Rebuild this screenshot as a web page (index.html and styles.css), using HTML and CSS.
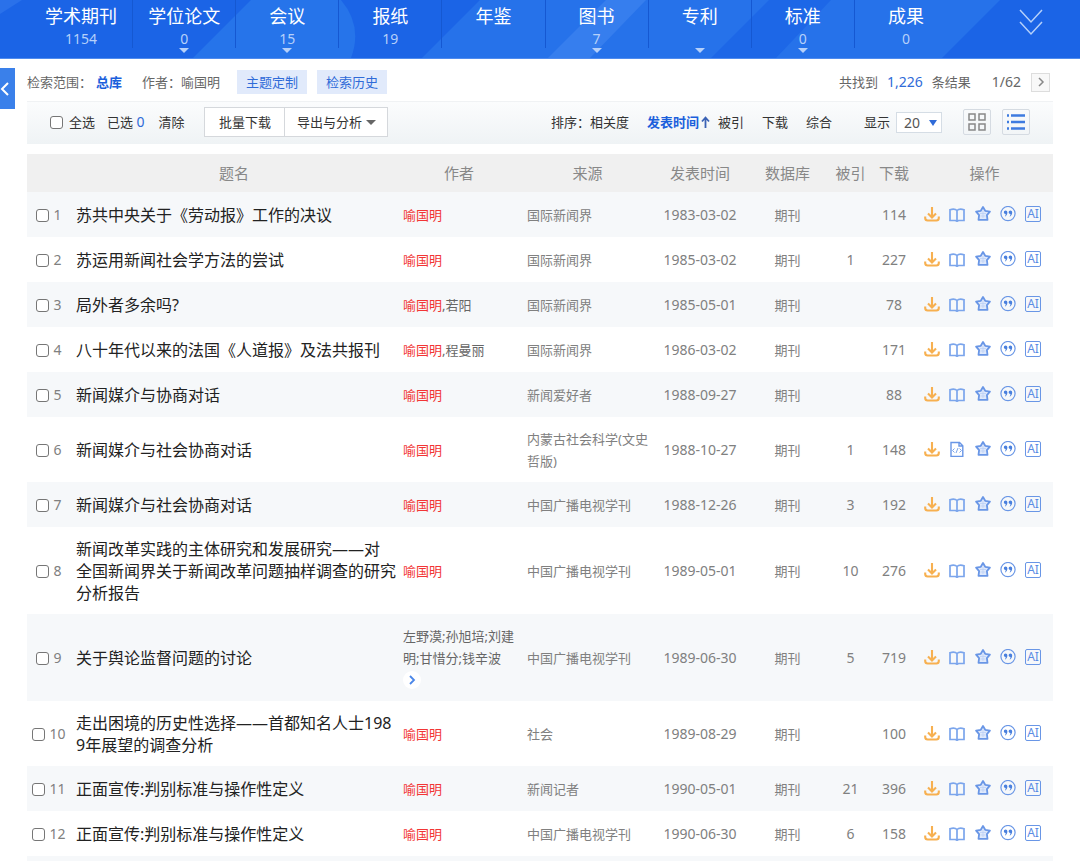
FILE: index.html
```html
<!DOCTYPE html>
<html lang="zh-CN">
<head>
<meta charset="utf-8">
<title>检索结果</title>
<link rel="stylesheet" href="styles.css">
</head>

<body>
<svg class="sprite" aria-hidden="true">
  <symbol id="i-down" viewBox="0 0 16 16"><path d="M8 1v10M4 7.500l4 4 4-4M1.200 10.500v1.500a2.500 2.500 0 0 0 2.500 2.500h8.600a2.500 2.500 0 0 0 2.500-2.500v-1.500" fill="none" stroke="#f7b050" stroke-width="2.100"/></symbol>
  <symbol id="i-book" viewBox="0 0 16 16"><path d="M8 4.500C6.500 3 3.500 3 1 3.700V14.500h5.500L8 15.300l1.500-.8H15V3.700C12.500 3 9.500 3 8 4.500zM8 4.500V15" fill="none" stroke="#7ba5ec" stroke-width="1.700"/></symbol>
  <symbol id="i-html" viewBox="0 0 16 16"><path d="M2 1.500h8.500l3.300 3.300v10.700H2zM10 1.500V5h3.500" fill="none" stroke="#6996e6" stroke-width="1.400"/><path d="M5.500 7.500l-2 2 2 2M10.500 7.500l2 2-2 2M9 7l-2 5" fill="none" stroke="#7ba5ec"/></symbol>
  <symbol id="i-star" viewBox="0 0 16 16"><path d="M8 1l2.200 3.800 4.700.9-3 3.400.6 4.700H3.500l.6-4.700-3-3.400 4.700-.9z" fill="#dfe9fb" stroke="#6996e6" stroke-width="1.800" stroke-linejoin="round"/><path d="M5 7.500h6M5.500 10h5M8 5v7" stroke="#b9cff5" stroke-width=".7"/></symbol>
  <symbol id="i-quote" viewBox="0 0 16 16"><circle cx="8" cy="7.600" r="7.100" fill="none" stroke="#6996e6" stroke-width="1.200"/><path d="M3.800 6.300a1.800 1.800 0 1 1 3.600 0c0 2-1 3.600-2.600 4.400.6-1 .9-1.600.9-2.600a1.800 1.800 0 0 1-1.900-1.800zM8.600 6.300a1.800 1.800 0 1 1 3.600 0c0 2-1 3.600-2.600 4.400.6-1 .9-1.600.9-2.600a1.800 1.800 0 0 1-1.900-1.800z" fill="#4a80de"/></symbol>
</svg>

<div class="header">
  <svg class="header-bg" viewBox="0 0 1080 58" preserveAspectRatio="none" aria-hidden="true">
    <path d="M0 0h22L0 14z" fill="#2a71ea"/>
    <path d="M193 58L251 0h90q22 26 10 58z" fill="#2674ea"/>
    <path d="M422 58L480 0h520l-58 58z" fill="#2672ea"/>
    <path d="M548 58L606 0h40l-56 58z" fill="#367eee"/>
    <path d="M711 58L769 0h62l-55 58z" fill="#1d67e7"/>
  </svg>
  <ul class="nav">
    <li><a href="#">学术期刊<em>1154</em></a></li>
    <li class="more"><a href="#">学位论文<em>0</em></a></li>
    <li class="more"><a href="#">会议<em>15</em></a></li>
    <li><a href="#">报纸<em>19</em></a></li>
    <li><a href="#">年鉴<em></em></a></li>
    <li class="more"><a href="#">图书<em>7</em></a></li>
    <li class="more"><a href="#">专利<em></em></a></li>
    <li class="more"><a href="#">标准<em>0</em></a></li>
    <li><a href="#">成果<em>0</em></a></li>
  </ul>
  <button class="expand" aria-label="展开"><svg width="26" height="28" viewBox="0 0 26 28"><path d="M2 2l11 12L24 2M2 14l11 12 11-12" fill="none" stroke="#b5d0fa" stroke-width="1.500"/></svg></button>
</div>

<button class="side" aria-label="展开侧栏"><svg width="10" height="14" viewBox="0 0 10 14"><path d="M8 1L2 7l6 6" fill="none" stroke="#fff" stroke-width="2"/></svg></button>

<div class="main">
  <div class="search">
    <span>检索范围<u>：</u></span><a class="db" href="#">总库</a>
    <span class="cond">作者<u>：</u>喻国明</span>
    <button class="tag">主题定制</button>
    <button class="tag">检索历史</button>
    <div class="total">共找到<b>1,226</b>条结果</div>
    <span class="page">1/62</span>
    <button class="next" aria-label="下一页"><svg width="8" height="10" viewBox="0 0 8 10"><path d="M2 1l4 4-4 4" fill="none" stroke="#888" stroke-width="1.500"/></svg></button>
  </div>

  <div class="toolbar">
    <label class="all"><input type="checkbox">全选</label>
    <span class="picked">已选 <i>0</i></span>
    <a class="clean" href="#">清除</a>
    <div class="btns">
      <button>批量下载</button>
      <button>导出与分析<s></s></button>
    </div>
    <div class="sort">
      <span>排序<u>：</u></span><a href="#">相关度</a>
      <a class="active" href="#">发表时间<svg width="13" height="12" viewBox="0 0 13 12"><path d="M6.500 12V2M3 5.500l3.500-4 3.500 4" fill="none" stroke="#3b62b5" stroke-width="1.800"/></svg></a>
      <a href="#">被引</a>
      <a href="#">下载</a>
      <a href="#">综合</a>
    </div>
    <label class="show" for="size">显示</label>
    <div class="size"><select id="size"><option>20</option><option>50</option></select></div>
    <button class="view" aria-label="缩略"><svg width="20" height="20" viewBox="0 0 20 20"><path d="M2 2h6v6H2zM12 2h6v6h-6zM2 12h6v6H2zM12 12h6v6h-6z" fill="none" stroke="#888" stroke-width="1.500"/></svg></button>
    <button class="view" aria-label="列表"><svg width="20" height="20" viewBox="0 0 20 20"><path d="M5 3.500h14M5 10h14M5 16.500h14M1 3.500h2M1 10h2M1 16.500h2" stroke="#3e7be0" stroke-width="2.600"/></svg></button>
  </div>

  <table class="result">
    <colgroup>
      <col class="c-num"><col><col class="c-author"><col class="c-source"><col class="c-date"><col class="c-data"><col class="c-quote"><col class="c-down"><col class="c-op">
    </colgroup>
    <thead>
      <tr><th></th><th>题名</th><th>作者</th><th>来源</th><th>发表时间</th><th>数据库</th><th>被引</th><th>下载</th><th>操作</th></tr>
    </thead>
    <tbody id="list"></tbody>
  </table>
  <div class="foot"></div>
</div>

<script>
	var me = '<a class="red" href="#">喻国明</a>';
	//题名, 作者, 来源, 发表时间, 被引, 下载, 图标
	var data = [
		['苏共中央关于《劳动报》工作的决议', me, '国际新闻界', '1983-03-02', '', 114],
		['苏运用新闻社会学方法的尝试', me, '国际新闻界', '1985-03-02', 1, 227],
		['局外者多余吗?', me + ',若阳', '国际新闻界', '1985-05-01', '', 78],
		['八十年代以来的法国《人道报》及法共报刊', me + ',程曼丽', '国际新闻界', '1986-03-02', '', 171],
		['新闻媒介与协商对话', me, '新闻爱好者', '1988-09-27', '', 88],
		['新闻媒介与社会协商对话', me, '内蒙古社会科学(文史哲版)', '1988-10-27', 1, 148, 'html'],
		['新闻媒介与社会协商对话', me, '中国广播电视学刊', '1988-12-26', 3, 192],
		['新闻改革实践的主体研究和发展研究——对<br>全国新闻界关于新闻改革问题抽样调查的研究分析报告', me, '中国广播电视学刊', '1989-05-01', 10, 276],
		['关于舆论监督问题的讨论', '左野漠;孙旭培;刘建明;甘惜分;钱辛波<button class="unfold" aria-label="更多作者"><svg width="8" height="10" viewBox="0 0 8 10"><path d="M2 1l4 4-4 4" fill="none" stroke="#4a86e8" stroke-width="1.800"/></svg></button>', '中国广播电视学刊', '1989-06-30', 5, 719],
		['走出困境的历史性选择——首都知名人士1989年展望的调查分析', me, '社会', '1989-08-29', '', 100],
		['正面宣传:判别标准与操作性定义', me, '新闻记者', '1990-05-01', 21, 396],
		['正面宣传:判别标准与操作性定义', me, '中国广播电视学刊', '1990-06-30', 6, 158]
	];

	function icon(name, title){
		return '<button aria-label="' + title + '"><svg width="16" height="16"><use href="#i-' + name + '"/></svg></button>';
	}

	var html = '';
	for(var i=0; i<data.length; i++){
		var d = data[i];
		html += '<tr><td class="num"><label><input type="checkbox">' + (i+1) + '</label></td>' +
			'<td class="name"><a href="#">' + d[0] + '</a></td>' +
			'<td class="author">' + d[1] + '</td>' +
			'<td class="source">' + d[2] + '</td>' +
			'<td class="date">' + d[3] + '</td>' +
			'<td>期刊</td>' +
			'<td class="date">' + d[4] + '</td>' +
			'<td class="date">' + d[5] + '</td>' +
			'<td class="op"><div>' + icon('down', '下载') + icon(d[6] || 'book', '阅读') + icon('star', '收藏') + icon('quote', '引用') +
			'<button class="ai">AI</button></div></td></tr>';
	}
	document.getElementById('list').innerHTML = html;
</script>
</body>
</html>
```

FILE: styles.css
```css
*{
	margin:0;
	padding:0;
	box-sizing:border-box;
	}
html{
	scrollbar-width:none;
	}
body{
	font:13px/22px "Noto Sans","Noto Sans CJK SC",sans-serif;
	color:#666;
	background:#fff;
	position:relative;
	}
li{
	list-style:none;
	}
a{
	color:inherit;
	text-decoration:none;
	}
em,i{
	font-style:normal;
	}
/* 居中的冒号 */
u{
	font-family:"Noto Sans CJK TC",sans-serif;
	line-height:1;
	text-decoration:none;
	}
button{
	border:0;
	background:none;
	font:inherit;
	color:inherit;
	cursor:pointer;
	}
svg{
	display:block;
	}
.sprite{
	position:absolute;
	width:0;
	height:0;
	}
input[type=checkbox]{
	appearance:none;
	width:13px;
	height:13px;
	border:1px solid #767676;
	border-radius:3px;
	background:#fff;
	}
input[type=checkbox]:checked{
	background:#1b66e6;
	}

/* 顶部导航 */
.header{
	display:flex;
	height:59px;
	padding-left:30px;
	background:#1b64e6;
	border-bottom:1px solid #4f8bee;
	position:relative;
	}
.header-bg{
	position:absolute;
	left:0;
	top:0;
	width:100%;
	height:100%;
	}
.nav{
	flex:1;
	display:flex;
	position:relative;
	}
.nav li{
	flex:1;
	height:48px;
	border-right:1px solid #1558d2;
	text-align:center;
	position:relative;
	}
.nav li:last-child{
	border-right:0;
	}
.nav a{
	display:block;
	padding-top:4px;
	font-size:18px;
	line-height:24px;
	color:#fff;
	}
.nav em{
	display:block;
	font-size:14px;
	line-height:22px;
	color:#b5d0fa;
	}
.nav .more:after{
	content:"";
	position:absolute;
	left:50%;
	top:48px;
	margin-left:-5px;
	border:5px solid transparent;
	border-top-color:#b5d0fa;
	border-bottom:0;
	}
.expand{
	width:123px;
	padding:0 0 14px 24px;
	position:relative;
	}
.expand svg{
	margin:0 auto;
	}
.side{
	position:absolute;
	left:0;
	top:68px;
	width:15px;
	height:41px;
	background:#3a80ea;
	}

.main{
	padding:0 27px;
	}
.search{
	display:flex;
	align-items:center;
	height:42px;
	padding:4px 3px 0 0;
	}
.search .db{
	margin-left:4px;
	font-weight:bold;
	color:#1b5fdc;
	}
.cond{
	margin:0 17px 0 20px;
	}
.tag{
	width:70px;
	height:24px;
	margin-right:10px;
	background:#e1eafb;
	color:#2f6bd8;
	}
.total{
	margin-left:auto;
	}
.total b{
	margin:0 9px;
	font-size:14px;
	font-weight:normal;
	color:#2f6bd8;
	}
.page{
	margin:0 10px 0 21px;
	font-size:14px;
	}
.next{
	width:19px;
	height:19px;
	padding-left:5px;
	border:1px solid #ddd;
	background:#f8f8f8;
	}

/* 工具栏 */
.toolbar{
	display:flex;
	align-items:center;
	height:43px;
	padding:0 23px 2px;
	border-top:1px solid #f0f2f4;
	background:linear-gradient(#fbfcfd,#eff3f5);
	color:#333;
	}
.all{
	display:flex;
	align-items:center;
	gap:6px;
	}
.picked{
	margin:0 14px 0 12px;
	}
.picked i{
	font-size:14px;
	color:#2f6bd8;
	}
.btns{
	display:flex;
	margin-left:20px;
	}
.btns button{
	display:flex;
	align-items:center;
	justify-content:center;
	width:81px;
	height:30px;
	border:1px solid #d5d8dc;
	background:#fff;
	}
.btns button + button{
	width:104px;
	margin-left:-1px;
	}
.btns s{
	margin-left:4px;
	border:5px solid transparent;
	border-top-color:#666;
	border-bottom:0;
	}
.sort{
	display:flex;
	margin-left:auto;
	}
.sort a{
	margin-right:18px;
	}
.sort .active{
	display:flex;
	align-items:center;
	margin-right:6px;
	font-weight:bold;
	color:#1b5fdc;
	}
.show{
	margin-left:14px;
	}
.size{
	margin:0 21px 0 6px;
	position:relative;
	}
.size select{
	display:block;
	appearance:none;
	width:46px;
	height:21px;
	padding-left:7px;
	border:1px solid #d5dde5;
	background:#fff;
	font:14px/19px "Noto Sans",sans-serif;
	color:#555;
	}
.size:after{
	content:"";
	position:absolute;
	right:5px;
	top:8px;
	border:4px solid transparent;
	border-top:6px solid #2f6bd8;
	border-bottom:0;
	}
.view{
	width:28px;
	height:26px;
	padding-left:3px;
	border:1px solid #d5dbe2;
	border-radius:2px;
	}
.view + .view{
	margin-left:11px;
	}

/* 结果列表 */
.result{
	width:100%;
	margin-top:10px;
	border-collapse:collapse;
	table-layout:fixed;
	}
.c-num{ width:44px}
.c-author{ width:124px}
.c-source{ width:133px}
.c-date{ width:92px}
.c-data{ width:83px}
.c-quote{ width:43px}
.c-down{ width:44px}
.c-op{ width:137px}
.result th{
	height:38px;
	background:#f0f0f0;
	font-size:15px;
	font-weight:normal;
	color:#888;
	}
.result td{
	height:45px;
	padding:11px 0 10px;
	text-align:center;
	vertical-align:middle;
	color:#808080;
	}
.result tbody tr:nth-child(odd){
	background:#f6f8fa;
	}
.num label{
	display:flex;
	align-items:center;
	justify-content:center;
	gap:4px;
	font-size:14px;
	}
.result .name{
	padding-left:5px;
	text-align:left;
	font-size:16px;
	color:#222;
	word-break:break-all;
	}
.result .author{
	padding-left:6px;
	padding-right:4px;
	text-align:left;
	color:#666;
	}
.result .source{
	padding-left:6px;
	padding-right:4px;
	text-align:left;
	}
.result .date{
	font-size:14px;
	}
.result .op{
	padding:10px 0 11px;
	}
.result .red{
	color:#f23535;
	}
.unfold{
	display:block;
	width:18px;
	height:18px;
	margin:2px 0;
	padding-left:5px;
	border-radius:50%;
	background:#fff;
	}
.op div{
	display:flex;
	align-items:center;
	justify-content:space-between;
	padding:0 12px 0 8px;
	}
.ai{
	width:16px;
	height:16px;
	border:1px solid #6996e6;
	border-radius:2px;
	font-size:12px;
	line-height:14px;
	color:#5b8de4;
	}
.foot{
	height:5px;
	background:#f6f8fa;
	}
```
